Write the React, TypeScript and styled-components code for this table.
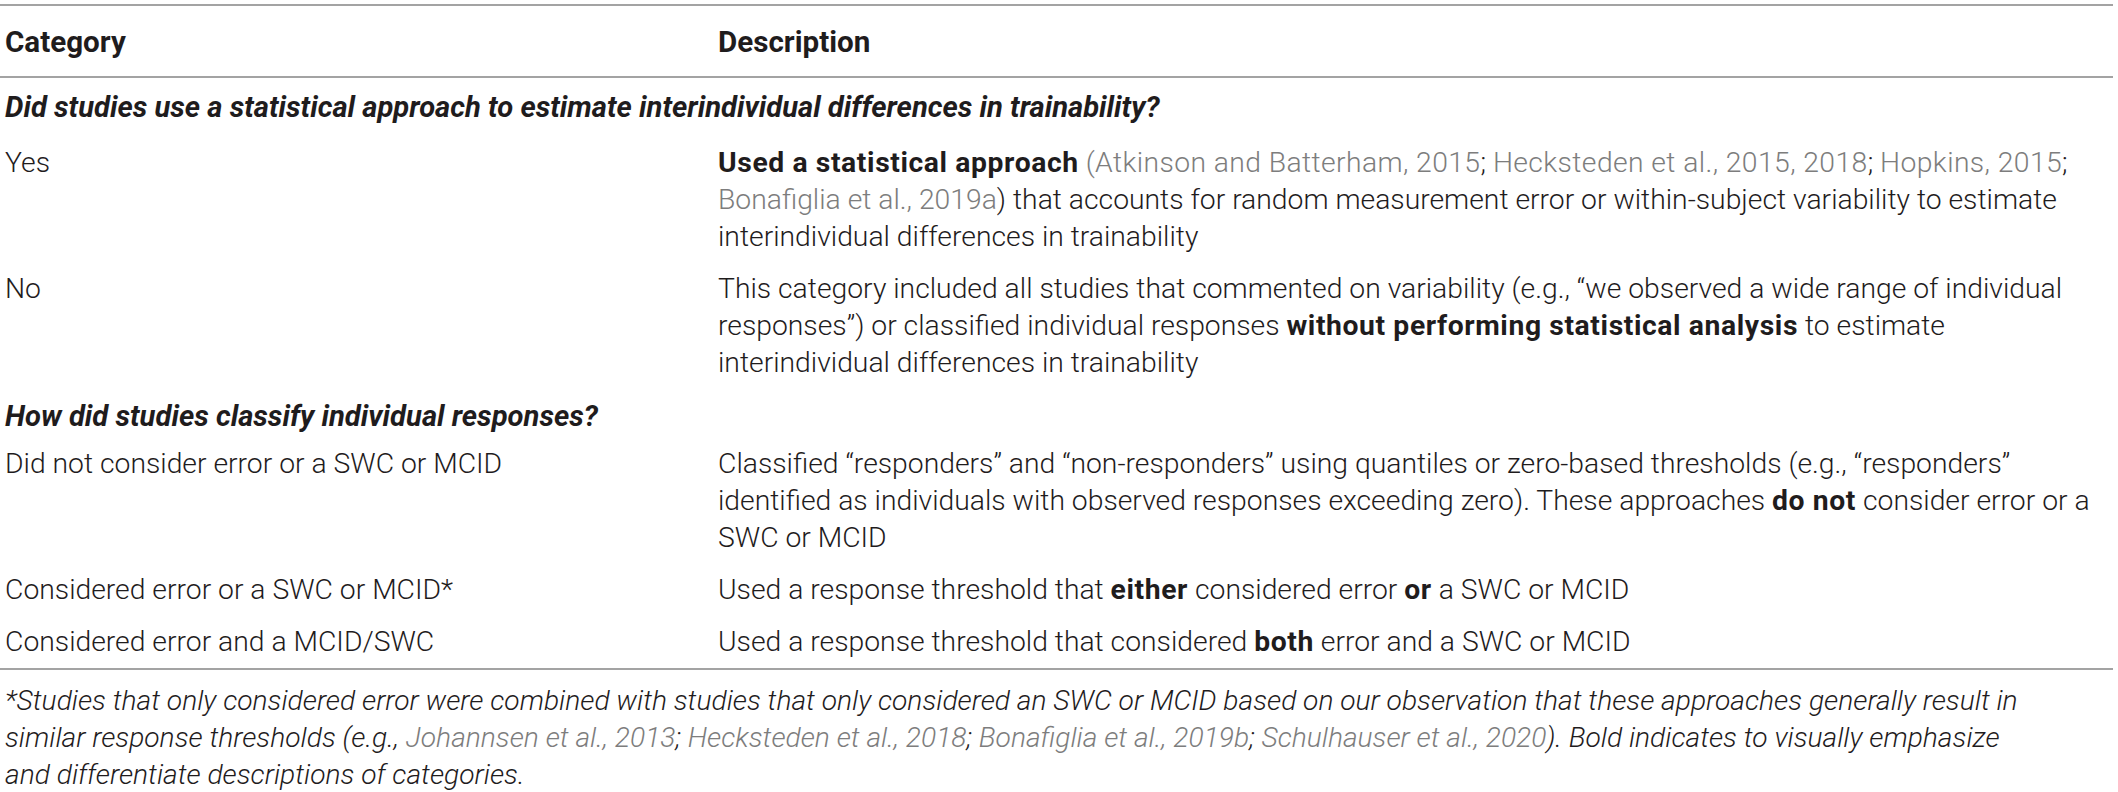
import React from "react";
import styled, { createGlobalStyle } from "styled-components";

const Global = createGlobalStyle`
  html, body { margin: 0; padding: 0; background: #ffffff; }
  body {
    font-family: Roboto, "Liberation Sans", Arial, Helvetica, sans-serif;
    font-weight: 300;
    color: #1f1c1d;
  }
`;

const Page = styled.div`
  width: 2113px;
  padding-top: 4px;
`;

const Table = styled.table`
  width: 100%;
  border-collapse: collapse;
  table-layout: fixed;
  font-size: 28.3px;
  line-height: 37px;
  border-top: 2px solid #a3a3a3;
  border-bottom: 2px solid #a3a3a3;
`;

const HeadCell = styled.th`
  text-align: left;
  font-weight: 700;
  font-size: 29.6px;
  padding: 18px 5px 15px;
  border-bottom: 2px solid #a3a3a3;
`;

const SectionCell = styled.td<{ $first?: boolean }>`
  font-weight: 700;
  font-style: italic;
  font-size: 29.2px;
  padding: ${(p) => (p.$first ? "11px 5px 11px" : "9px 5px 3px")};
`;

const Cell = styled.td`
  vertical-align: top;
  padding: 7px 5px 8px;
  white-space: nowrap;
`;

const Strong = styled.b`
  font-weight: 700;
  letter-spacing: 0.6px;
`;

const Cite = styled.span<{ $loose?: boolean }>`
  color: #7d7d7d;
  letter-spacing: ${(p) => (p.$loose ? "0.4px" : "normal")};
`;

const Footnote = styled.p`
  margin: 0;
  padding: 12px 5px 0;
  font-size: 28.2px;
  line-height: 37px;
  font-style: italic;
  white-space: nowrap;
`;

export default function App() {
  return (
    <Page>
      <Global />
      <Table>
        <colgroup>
          <col style={{ width: "713px" }} />
          <col />
        </colgroup>
        <thead>
          <tr>
            <HeadCell>Category</HeadCell>
            <HeadCell>Description</HeadCell>
          </tr>
        </thead>
        <tbody>
          <tr>
            <SectionCell colSpan={2} $first>
              Did studies use a statistical approach to estimate interindividual differences in trainability?
            </SectionCell>
          </tr>
          <tr>
            <Cell>Yes</Cell>
            <Cell>
              <Strong>Used a statistical approach</Strong>{" "}
              <Cite $loose>(Atkinson and Batterham, 2015</Cite>; <Cite $loose>Hecksteden et al., 2015, 2018</Cite>;{" "}
              <Cite $loose>Hopkins, 2015</Cite>;
              <br />
              <Cite>Bonafiglia et al., 2019a</Cite>) that accounts for random measurement error or within-subject
              variability to estimate
              <br />
              interindividual differences in trainability
            </Cell>
          </tr>
          <tr>
            <Cell>No</Cell>
            <Cell>
              This category included all studies that commented on variability (e.g., “we observed a wide range of
              individual
              <br />
              responses”) or classified individual responses <Strong>without performing statistical analysis</Strong> to
              estimate
              <br />
              interindividual differences in trainability
            </Cell>
          </tr>
          <tr>
            <SectionCell colSpan={2}>How did studies classify individual responses?</SectionCell>
          </tr>
          <tr>
            <Cell>Did not consider error or a SWC or MCID</Cell>
            <Cell>
              Classified “responders” and “non-responders” using quantiles or zero-based thresholds (e.g., “responders”
              <br />
              identified as individuals with observed responses exceeding zero). These approaches{" "}
              <Strong>do not</Strong> consider error or a
              <br />
              SWC or MCID
            </Cell>
          </tr>
          <tr>
            <Cell>Considered error or a SWC or MCID*</Cell>
            <Cell>
              Used a response threshold that <Strong>either</Strong> considered error <Strong>or</Strong> a SWC or MCID
            </Cell>
          </tr>
          <tr>
            <Cell>Considered error and a MCID/SWC</Cell>
            <Cell>
              Used a response threshold that considered <Strong>both</Strong> error and a SWC or MCID
            </Cell>
          </tr>
        </tbody>
      </Table>
      <Footnote>
        *Studies that only considered error were combined with studies that only considered an SWC or MCID based on our
        observation that these approaches generally result in
        <br />
        similar response thresholds (e.g., <Cite>Johannsen et al., 2013</Cite>; <Cite>Hecksteden et al., 2018</Cite>;{" "}
        <Cite>Bonafiglia et al., 2019b</Cite>; <Cite>Schulhauser et al., 2020</Cite>). Bold indicates to visually
        emphasize
        <br />
        and differentiate descriptions of categories.
      </Footnote>
    </Page>
  );
}
